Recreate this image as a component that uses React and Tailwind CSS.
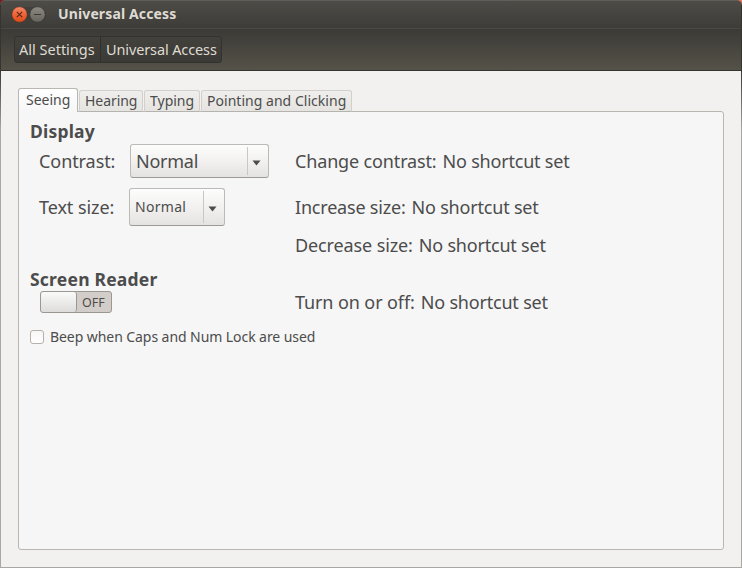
import React from "react";

const TABS = [
  { label: "Hearing", box: "w-[64px]", tracking: "tracking-[-0.05px]" },
  { label: "Typing", box: "w-[56px]", tracking: "tracking-[0px]" },
  { label: "Pointing and Clicking", box: "w-[151px]", tracking: "tracking-[0.03px]" },
];

function TitleBar() {
  return (
    <div className="flex h-[28px] items-center rounded-t-[5px] border-t border-[#5f5e58] bg-gradient-to-b from-[#4d4c47] to-[#3d3c38] pl-[11px]">
      <svg width="36" height="18" viewBox="0 0 36 18" className="shrink-0">
        <defs>
          <linearGradient id="close" x1="0" y1="0" x2="0" y2="1">
            <stop offset="0" stopColor="#f58a68" />
            <stop offset="0.5" stopColor="#ee6337" />
            <stop offset="1" stopColor="#df4b1a" />
          </linearGradient>
          <linearGradient id="min" x1="0" y1="0" x2="0" y2="1">
            <stop offset="0" stopColor="#8b8981" />
            <stop offset="1" stopColor="#66645d" />
          </linearGradient>
        </defs>
        <rect x="0" y="1" width="35" height="16" rx="8" fill="#403f3a" />
        <circle cx="8.5" cy="8.5" r="7.7" fill="url(#close)" stroke="#54301f" strokeWidth="0.5" />
        <path d="M5.8 5.8l5.4 5.4M11.2 5.8l-5.4 5.4" stroke="#5a2a18" strokeWidth="1.2" />
        <circle cx="26.5" cy="8.5" r="7.7" fill="url(#min)" stroke="#32312d" strokeWidth="0.5" />
        <path d="M23 8.5h7" stroke="#3a3934" strokeWidth="1" />
      </svg>
      <span className="-mt-[2px] ml-[11px] text-[14px] leading-none font-bold tracking-[0.13px] text-[#dfdbd2]">Universal Access</span>
    </div>
  );
}

function Toolbar() {
  return (
    <div className="flex h-[43px] items-start border-t border-b border-t-[#4a4943] border-b-[#35342f] bg-gradient-to-b from-[#3b3a36] to-[#555248] pt-[7px] pl-[14px]">
      <div className="flex h-[27px] rounded-[3px] border border-[#33322e] bg-gradient-to-b from-[#42413c] to-[#3b3a36] text-[14.5px] leading-[25px] whitespace-nowrap text-[#dfdbd2]">
        <div className="w-[86px] border-r border-[#302f2b] pl-[4px] tracking-[0px]">All Settings</div>
        <div className="w-[120px] pl-[5px] tracking-[-0.12px]">Universal Access</div>
      </div>
    </div>
  );
}

function Tabs() {
  return (
    <div className="relative z-10 -mb-px flex h-[24px] items-end text-[14px] whitespace-nowrap">
      <div className="mr-px h-[24px] w-[60px] rounded-t-[3px] border border-b-0 border-[#b9b7b2] bg-gradient-to-b from-white to-[#f6f6f6] pl-[7px] leading-[22px] tracking-[0px]">Seeing</div>
      {TABS.map((t) => (
        <div key={t.label} className={`${t.box} ${t.tracking} mr-px h-[22px] rounded-t-[3px] border border-[#d2d0cc] border-b-[#b4b3ae] bg-gradient-to-b from-[#efeeec] to-[#e6e4e1] pl-[5px] leading-[19px]`}>{t.label}</div>
      ))}
    </div>
  );
}

function Combo({ className, children }) {
  return (
    <div className={`${className} flex shrink-0 items-center rounded-[3px] border border-[#bcbab6] border-b-[#9c9a96] bg-gradient-to-b from-[#fdfdfd] via-[#f2f1f0] to-[#e5e3e1]`}>
      <span className="flex-1 pl-[5px] leading-none">{children}</span>
      <span className="my-[2px] flex w-[21px] items-center self-stretch border-l border-[#c9c7c4] pl-[4px]">
        <svg width="9" height="6" viewBox="0 0 9 6" className="mt-[3px]">
          <path d="M0.5 0.5h8l-4 5z" fill="#4c4c4c" />
        </svg>
      </span>
    </div>
  );
}

function Shortcut({ label, tracking }) {
  return (
    <div className="flex whitespace-nowrap">
      <span className={`${tracking} mr-[6px]`}>{label}</span>
      <span className="tracking-[-0.2px]">No shortcut set</span>
    </div>
  );
}

export default function App() {
  return (
    <div className="relative flex h-[568px] w-[742px] flex-col overflow-hidden bg-[linear-gradient(to_right,#7d1a22_50%,#f4755a_50%)] font-['Noto_Sans',sans-serif] text-[#4c4c4c]">
      <TitleBar />
      <Toolbar />
      <main className="flex flex-1 flex-col border border-t-0 border-[#a9a7a4] bg-[#f2f1f0] px-[17px] pt-[17px] pb-[17px]">
        <Tabs />
        <section className="flex-1 rounded-[3px] rounded-tl-none border border-[#b9b7b2] bg-[#f6f6f6] pt-[7px] pl-[11px] text-[18px]">
          <h2 className="h-[25px] text-[17.5px] leading-[24px] font-bold tracking-[0.2px]">Display</h2>
          <div className="flex h-[34px] items-center">
            <span className="w-[100px] pl-[9px] tracking-[-0.07px]">Contrast:</span>
            <Combo className="mr-[26px] h-[34px] w-[139px] tracking-[-0.25px]">Normal</Combo>
            <Shortcut label="Change contrast:" tracking="tracking-[-0.15px]" />
          </div>
          <div className="mt-[10px] flex h-[38px] items-center">
            <span className="w-[99px] pl-[9px] tracking-[-0.07px]">Text size:</span>
            <Combo className="mr-[70px] h-[38px] w-[96px] text-[14px] tracking-[0.3px]">Normal</Combo>
            <Shortcut label="Increase size:" tracking="tracking-[-0.2px]" />
          </div>
          <div className="flex h-[38px] items-center pl-[265px]">
            <Shortcut label="Decrease size:" tracking="tracking-[-0.12px]" />
          </div>
          <h2 className="mt-[4px] h-[23px] text-[17.5px] leading-[23px] font-bold tracking-[0.22px]">Screen Reader</h2>
          <div className="flex h-[22px] items-center pl-[10px]">
            <div className="mr-[183px] flex h-[22px] w-[72px] rounded-[3px] border border-[#9b9893] bg-[#d2cdc8] text-[12.5px] leading-[21px]">
              <div className="mr-[5px] w-[36px] rounded-[3px] border-r border-[#9b9893] bg-gradient-to-b from-[#fafafa] to-[#dddcda]" />
              OFF
            </div>
            <Shortcut label="Turn on or off:" tracking="tracking-[-0.1px]" />
          </div>
          <div className="mt-[14px] flex h-[20px] items-center text-[14px]">
            <div className="mr-[6px] h-[14px] w-[14px] rounded-[3px] border border-[#b5b0aa] bg-gradient-to-b from-[#f6f6f6] to-white" />
            <span className="-mt-[2px] tracking-[-0.07px]">Beep when Caps and Num Lock are used</span>
          </div>
        </section>
      </main>
      <div className="absolute top-[5px] left-0 h-[125px] w-px bg-gradient-to-b from-[#35342f] from-50% to-[#a9a7a4]" />
      <div className="absolute top-[5px] right-0 h-[125px] w-px bg-gradient-to-b from-[#35342f] from-50% to-[#a9a7a4]" />
    </div>
  );
}
